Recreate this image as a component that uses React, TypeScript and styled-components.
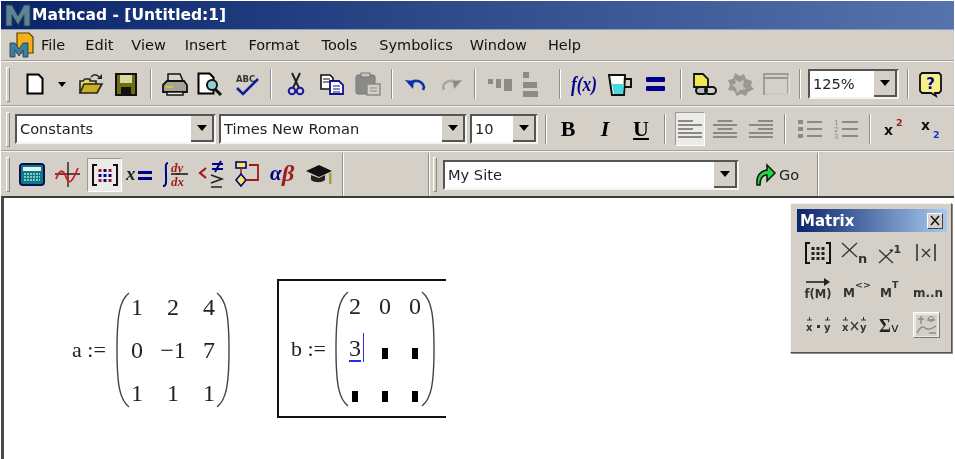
import React from "react";
import styled, { createGlobalStyle } from "styled-components";

const GlobalStyle = createGlobalStyle`
  html, body { margin: 0; padding: 0; background: #fff; }
  body { width: 955px; height: 459px; overflow: hidden; font-family: "DejaVu Sans", sans-serif; }
`;

const UI_FONT = `"DejaVu Sans", "Liberation Sans", sans-serif`;
const MATH_FONT = `"Liberation Serif", serif`;

const Frame = styled.div`
  display: flex;
  flex-direction: column;
  width: 953px;
  height: 458px;
  margin: 1px 0 0 1px;
  background: #d4d0c8;
  filter: blur(0.45px);
`;

const TitleBar = styled.div`
  display: flex;
  align-items: center;
  gap: 1px;
  height: 28px;
  padding-left: 4px;
  background: linear-gradient(90deg, #0a246a 0%, #2c4a8a 45%, #5573ac 100%);
  border-bottom: 1px solid #8a9cc0;
`;

const TitleText = styled.span`
  color: #fff;
  font: bold 15.5px ${UI_FONT};
  white-space: nowrap;
`;

const MenuBar = styled.div`
  display: flex;
  align-items: center;
  height: 30px;
  padding-left: 8px;
`;

const MenuItem = styled.span<{ $ml: number }>`
  margin-left: ${(p) => p.$ml}px;
  font: 14.5px ${UI_FONT};
  color: #111;
  white-space: nowrap;
`;

const Band = styled.div`
  height: 3px;
  background: linear-gradient(#a09e98 0 1px, #f6f5f2 1px 2px, #d4d0c8 2px);
`;

const ToolRow = styled.div<{ $h: number }>`
  display: flex;
  align-items: center;
  height: ${(p) => p.$h}px;
  padding-left: 5px;
`;

const Gripper = styled.div`
  flex: none;
  width: 2px;
  height: 33px;
  border: 1px solid;
  border-color: #fff #8a8a84 #8a8a84 #fff;
`;

const InnerGripper = styled(Gripper)`
  margin-left: 3px;
`;

const Tool = styled.div<{ $w: number; $ml: number }>`
  flex: none;
  display: flex;
  align-items: center;
  justify-content: center;
  width: ${(p) => p.$w}px;
  margin-left: ${(p) => p.$ml}px;
`;

const ActiveTool = styled(Tool)`
  height: 34px;
  background: #ecebe7;
  border: 1px solid;
  border-color: #9a9a94 #fff #fff #9a9a94;
  box-sizing: border-box;
`;

const Sep = styled.div<{ $ml: number }>`
  flex: none;
  width: 1px;
  height: 30px;
  margin-left: ${(p) => p.$ml}px;
  background: #8f8d88;
  border-right: 1px solid #fff;
`;

const EndLine = styled(Sep)`
  height: 43px;
`;

const Combo = styled.div<{ $w: number; $ml: number }>`
  flex: none;
  display: flex;
  box-sizing: border-box;
  width: ${(p) => p.$w}px;
  height: 30px;
  margin-left: ${(p) => p.$ml}px;
  background: #fff;
  border: 2px solid;
  border-color: #555 #f4f4f0 #f4f4f0 #555;
`;

const ComboText = styled.span`
  flex: 1;
  padding-left: 3px;
  font: 14.6px/26px ${UI_FONT};
  color: #222;
  white-space: nowrap;
  overflow: hidden;
`;

const ComboButton = styled.div`
  flex: none;
  display: flex;
  align-items: center;
  justify-content: center;
  width: 23px;
  background: #d4d0c8;
  border-right: 2px solid #555;
  border-bottom: 2px solid #555;
  box-sizing: border-box;
  &::after {
    content: "";
    border: 5px solid transparent;
    border-top: 6px solid #000;
    border-bottom: 0;
  }
`;

const StyleLetter = styled.span<{ $italic?: boolean; $under?: boolean }>`
  font-family: ${MATH_FONT};
  font-weight: bold;
  font-size: 22px;
  color: #000;
  font-style: ${(p) => (p.$italic ? "italic" : "normal")};
  text-decoration: ${(p) => (p.$under ? "underline" : "none")};
`;

const GoText = styled.span`
  margin-left: 3px;
  font: 14.5px ${UI_FONT};
  color: #222;
`;

const Canvas = styled.div`
  position: relative;
  flex: 1;
  background: #fff;
  border-top: 2px solid #3c3c3c;
  border-left: 3px solid #4a4a4a;
`;

const MathRegion = styled.div<{ $left: number; $top: number }>`
  position: absolute;
  left: ${(p) => p.$left}px;
  top: ${(p) => p.$top}px;
  display: flex;
  align-items: center;
  font-family: ${MATH_FONT};
  color: #222;
`;

const SelectedRegion = styled(MathRegion)`
  box-sizing: border-box;
  width: 169px;
  height: 139px;
  padding-left: 12px;
  border: solid #111;
  border-width: 2px 0 2px 2px;
`;

const Assign = styled.span<{ $w: number }>`
  flex: none;
  width: ${(p) => p.$w}px;
  font-size: 22px;
  white-space: pre;
`;

const MatrixGrid = styled.div<{ $col: number; $gap: number }>`
  display: grid;
  grid-template-columns: repeat(3, ${(p) => p.$col}px);
  grid-auto-rows: 43px;
  column-gap: ${(p) => p.$gap}px;
  justify-items: center;
  align-items: center;
  font-size: 24px;
  line-height: 1;
`;

const Cell = styled.span`
  white-space: nowrap;
`;

const Editing = styled.span`
  position: relative;
  display: inline-block;
  border-bottom: 2px solid #2a2ae0;
  line-height: 24px;
  &::after {
    content: "";
    position: absolute;
    right: -3px;
    top: -3px;
    bottom: -2px;
    width: 1px;
    background: #2a2ae0;
  }
`;

const Hole = styled.span`
  display: block;
  width: 6px;
  height: 11px;
  margin-top: 9px;
  background: #000;
`;

const Paren = styled.svg`
  flex: none;
  display: block;
`;

const Palette = styled.div`
  position: absolute;
  left: 786px;
  top: 5px;
  box-sizing: border-box;
  width: 162px;
  height: 150px;
  padding: 5px 4px 0 6px;
  background: #d4d0c8;
  border: 1px solid;
  border-color: #f4f3f0 #555 #555 #f4f3f0;
  box-shadow: 1px 1px 0 #888;
`;

const PaletteTitle = styled.div`
  display: flex;
  align-items: center;
  justify-content: space-between;
  height: 23px;
  padding: 0 4px 0 3px;
  background: linear-gradient(90deg, #0a246a, #a6caf0);
  color: #fff;
  font: bold 15px ${UI_FONT};
`;

const CloseButton = styled.div`
  display: flex;
  align-items: center;
  justify-content: center;
  box-sizing: border-box;
  width: 16px;
  height: 16px;
  background: #d4d0c8;
  border: 1px solid;
  border-color: #fff #444 #444 #fff;
`;

const PaletteGrid = styled.div`
  display: grid;
  grid-template-columns: repeat(4, 36px);
  grid-template-rows: repeat(3, 36px);
  justify-content: center;
  justify-items: center;
  align-items: center;
  margin-top: 3px;
`;

const Pushed = styled.div`
  display: flex;
  align-items: center;
  justify-content: center;
  box-sizing: border-box;
  width: 27px;
  height: 26px;
  background: #e8e7e3;
  border: 1px solid;
  border-color: #fff #777 #777 #fff;
`;

const Ico = ({ w, h, children }: { w: number; h: number; children: React.ReactNode }) => (
  <svg width={w} height={h} viewBox={`0 0 ${w} ${h}`} style={{ display: "block", overflow: "visible" }}>
    {children}
  </svg>
);

const GRAY = "#8d8b86";
const BLUE = "#00008c";
const RED = "#9c1c1c";

const TitleLogo = () => (
  <Ico w={26} h={24}>
    <path d="M1 23V2h6l6 11 6-11h6v21h-6V12l-6 10-6-10v11z" fill="#5d8494" stroke="#26404e" strokeWidth="1" />
  </Ico>
);

const MenuLogo = () => (
  <Ico w={25} h={26}>
    <path d="M8 1h12l4 4v16H8z" fill="#f2b21c" stroke="#5a4000" strokeWidth="1.2" />
    <path d="M1 25V11h5l4 6 4-6h5v14h-5v-7l-4 6-4-6v7z" fill="#3f7f9e" stroke="#16384a" strokeWidth=".8" />
  </Ico>
);

const NewIcon = () => (
  <Ico w={18} h={22}>
    <path d="M1.500 1.500h11l4 4v15h-15z" fill="#fff" stroke="#000" strokeWidth="2" />
  </Ico>
);
const DropIcon = () => (
  <Ico w={8} h={5}>
    <path d="M0 0h8L4 5z" fill="#000" />
  </Ico>
);
const OpenIcon = () => (
  <Ico w={24} h={22}>
    <path d="M1 20V8h3l2-2h5v2h6v3" fill="#e8d86a" stroke="#222" strokeWidth="1.6" />
    <path d="M1 20l4-9h18l-5 9z" fill="#c8b020" stroke="#222" strokeWidth="1.6" />
    <path d="M12 4c2-3 6-3 8 0" fill="none" stroke="#222" strokeWidth="1.5" />
    <path d="M23 1v5h-5z" fill="#222" />
  </Ico>
);
const SaveIcon = () => (
  <Ico w={22} h={23}>
    <rect x="1" y="1" width="20" height="21" fill="#6f6f10" stroke="#111" strokeWidth="2" />
    <rect x="5" y="2" width="12" height="8" fill="#d8d8a0" />
    <rect x="6" y="14" width="10" height="7" fill="#111" />
  </Ico>
);
const PrintIcon = () => (
  <Ico w={26} h={23}>
    <path d="M6 1h12l3 7H6z" fill="#d8d8d0" stroke="#111" strokeWidth="1.5" />
    <path d="M1 12l4-4h17l3 4v7H1z" fill="#a4a49c" stroke="#111" strokeWidth="1.8" />
    <rect x="4" y="13" width="7" height="2" fill="#d8c820" />
    <path d="M5 19h16v3H5z" fill="#eee" stroke="#111" strokeWidth="1.5" />
  </Ico>
);
const PreviewIcon = () => (
  <Ico w={26} h={24}>
    <path d="M1.500 1.500h11l4 4v16h-15z" fill="#fff" stroke="#000" strokeWidth="2" />
    <circle cx="15" cy="13" r="5" fill="#8fd0d8" stroke="#111" strokeWidth="2" />
    <path d="M18 17l6 6" stroke="#111" strokeWidth="3" />
  </Ico>
);
const SpellIcon = () => (
  <Ico w={24} h={23}>
    <text x="1" y="9" fontFamily={UI_FONT} fontWeight="bold" fontSize="8.5" fill="#333">ABC</text>
    <path d="M2 15l6 6L23 6" fill="none" stroke="#0c1f9a" strokeWidth="2.6" />
  </Ico>
);
const CutIcon = () => (
  <Ico w={16} h={24}>
    <path d="M4 1l7 15M12 1L5 16" stroke="#222" strokeWidth="2" />
    <circle cx="4" cy="19" r="3.3" fill="none" stroke="#1a1a9c" strokeWidth="2" />
    <circle cx="12" cy="19" r="3.3" fill="none" stroke="#1a1a9c" strokeWidth="2" />
  </Ico>
);
const CopyIcon = () => (
  <Ico w={24} h={21}>
    <path d="M1 1h9l3 3v11H1z" fill="#fff" stroke="#111" strokeWidth="1.6" />
    <path d="M3 5h7M3 8h7" stroke="#111" />
    <path d="M10 7h9l4 4v9H10z" fill="#fff" stroke="#101090" strokeWidth="1.8" />
    <path d="M13 12h7M13 15h7M13 18h7" stroke="#101090" />
  </Ico>
);
const PasteIcon = () => (
  <Ico w={26} h={24}>
    <rect x="1" y="3" width="19" height="19" rx="2" fill="#8a8a86" stroke="#777" />
    <rect x="6" y="1" width="9" height="4" fill="#c8c8c4" stroke="#777" />
    <rect x="12" y="12" width="13" height="11" fill="#d4d0c8" stroke="#8a8a86" strokeWidth="1.5" />
    <path d="M15 16h7M15 19h7" stroke="#8a8a86" />
  </Ico>
);
const UndoIcon = () => (
  <Ico w={21} h={15}>
    <path d="M4 7c5-5 13-4 15 3l-1 3" fill="none" stroke="#1030a8" strokeWidth="2.6" />
    <path d="M0 3l9 1-1 8z" fill="#1030a8" />
  </Ico>
);
const RedoIcon = () => (
  <Ico w={21} h={15}>
    <path d="M17 7c-5-5-13-4-15 3l1 3" fill="none" stroke="#a8a8a2" strokeWidth="2.6" />
    <path d="M21 3l-9 1 1 8z" fill="#8a8a86" />
  </Ico>
);
const AlignHIcon = () => (
  <Ico w={24} h={13}>
    <rect x="0" y="1" width="5" height="5" fill={GRAY} />
    <rect x="8" y="1" width="5" height="9" fill={GRAY} />
    <rect x="16" y="1" width="8" height="12" fill={GRAY} />
  </Ico>
);
const AlignVIcon = () => (
  <Ico w={15} h={25}>
    <rect x="0" y="0" width="6" height="6" fill={GRAY} />
    <rect x="0" y="10" width="14" height="6" fill={GRAY} />
    <rect x="0" y="19" width="15" height="6" fill={GRAY} />
  </Ico>
);
const FxIcon = () => (
  <Ico w={26} h={24}>
    <text x="0" y="19" fontFamily={MATH_FONT} fontStyle="italic" fontWeight="bold" fontSize="22" fill={BLUE} textLength="26" lengthAdjust="spacingAndGlyphs">f(x)</text>
  </Ico>
);
const BeakerIcon = () => (
  <Ico w={24} h={23}>
    <path d="M1 2h16l-1 20H4z" fill="#fff" stroke="#111" strokeWidth="2" />
    <path d="M4 11h12l-1 10H6z" fill="#49d8e0" />
    <path d="M17 6h6v8h-6" fill="none" stroke="#111" strokeWidth="2" />
  </Ico>
);
const EqualIcon = () => (
  <Ico w={19} h={14}>
    <rect x="0" y="0" width="19" height="5" rx="1" fill={BLUE} />
    <rect x="0" y="9" width="19" height="5" rx="1" fill={BLUE} />
  </Ico>
);
const LinkIcon = () => (
  <Ico w={24} h={22}>
    <path d="M1 1h9l5 5v8H1z" fill="#f0e850" stroke="#111" strokeWidth="1.8" />
    <rect x="3" y="14" width="11" height="7" rx="3.5" fill="#bbb" stroke="#111" strokeWidth="2" />
    <rect x="12" y="14" width="11" height="7" rx="3.5" fill="none" stroke="#111" strokeWidth="2" />
  </Ico>
);
const GearIcon = () => (
  <Ico w={27} h={24}>
    <path d="M8 1l5 3 4-2 2 5 6 2-1 5 3 3-6 3-2 4-5-2-4 2-3-5-6-1 2-5-2-5 5-1z" fill="#9a9892" />
    <path d="M8 7l4 3 5-2-1 6 3 3-6 1-3 3-1-5-4-3 4-2z" fill="#c4c2bc" />
  </Ico>
);
const WindowIcon = () => (
  <Ico w={26} h={22}>
    <rect x="1" y="1" width="24" height="20" fill="#d4d0c8" stroke="#9a9892" strokeWidth="1.8" />
    <path d="M1 5h24" stroke="#9a9892" strokeWidth="2" />
    <path d="M2 21h24V2" fill="none" stroke="#f4f4f0" />
  </Ico>
);
const HelpIcon = () => (
  <Ico w={23} h={25}>
    <path d="M3 1h17l2 2v16l-2 2h-4l1 3-5-3H3l-2-2V3z" fill="#f6f08a" stroke="#111" strokeWidth="1.8" />
    <text x="11.5" y="17" textAnchor="middle" fontFamily={UI_FONT} fontWeight="bold" fontSize="15" fill={BLUE}>?</text>
  </Ico>
);
const LinesIcon = ({ kind }: { kind: "left" | "center" | "right" }) => {
  const rows = [0, 1, 2, 3, 4];
  const widths = [15, 24, 15, 24, 24];
  return (
    <Ico w={24} h={20}>
      {rows.map((r) => {
        const w = widths[r];
        const x = kind === "left" ? 0 : kind === "center" ? (24 - w) / 2 : 24 - w;
        return <rect key={r} x={x} y={r * 4 + 1} width={w} height="2" fill="#8a8a84" />;
      })}
    </Ico>
  );
};
const BulletIcon = () => (
  <Ico w={24} h={20}>
    {[1, 8, 15].map((y) => (
      <g key={y}>
        <rect x="0" y={y} width="5" height="4" fill="#8a8a84" />
        <rect x="9" y={y + 1} width="15" height="2" fill="#8a8a84" />
      </g>
    ))}
  </Ico>
);
const NumberIcon = () => (
  <Ico w={24} h={20}>
    {[1, 8, 15].map((y, i) => (
      <g key={y}>
        <text x="0" y={y + 5} fontFamily={UI_FONT} fontSize="7" fill="#8a8a84">{i + 1}</text>
        <rect x="8" y={y + 1} width="16" height="2" fill="#8a8a84" />
      </g>
    ))}
  </Ico>
);
const ScriptIcon = ({ sup }: { sup: boolean }) => (
  <Ico w={20} h={20}>
    <text x="0" y={sup ? 16 : 11} fontFamily={UI_FONT} fontWeight="bold" fontSize="14" fill="#111">x</text>
    <text x="12" y={sup ? 7 : 19} fontFamily={UI_FONT} fontWeight="bold" fontSize="9.5" fill={sup ? RED : "#1a2ee0"}>2</text>
  </Ico>
);
const CalcIcon = () => (
  <Ico w={26} h={23}>
    <rect x="1" y="1" width="24" height="21" rx="3" fill="#0a7a88" stroke="#06104a" strokeWidth="2" />
    <rect x="4" y="4" width="18" height="4" fill="#e8eee8" />
    <path d="M5 11h16M5 14h16M5 17h16" stroke="#b8e0d8" strokeWidth="1.5" strokeDasharray="2 1" />
  </Ico>
);
const GraphIcon = () => (
  <Ico w={25} h={25}>
    <path d="M13 0v25M0 12h25" stroke="#222" strokeWidth="1.4" />
    <path d="M1 17c4-10 7-10 10-2s6 6 12-9" fill="none" stroke="#e8141c" strokeWidth="1.8" />
  </Ico>
);
const DotsMatrixIcon = ({ dark }: { dark?: boolean }) => {
  const xs = [8, 13, 18];
  const ys = [5, 10, 15];
  return (
    <Ico w={26} h={22}>
      <path d="M5 1H1v20h4M21 1h4v20h-4" fill="none" stroke="#111" strokeWidth="2" />
      {ys.map((y, r) =>
        xs.map((x, c) => (
          <rect
            key={`${r}${c}`}
            x={x - 1.5}
            y={y}
            width="3"
            height="3"
            fill={dark ? "#222" : c === 1 || r === 1 ? BLUE : RED}
          />
        )),
      )}
    </Ico>
  );
};
const XEqualIcon = () => (
  <Ico w={26} h={16}>
    <text x="0" y="13" fontFamily={MATH_FONT} fontStyle="italic" fontWeight="bold" fontSize="19" fill="#222">x</text>
    <rect x="12" y="4" width="14" height="3" fill={BLUE} />
    <rect x="12" y="10" width="14" height="3" fill={BLUE} />
  </Ico>
);
const CalculusIcon = () => (
  <Ico w={27} h={27}>
    <path d="M6 2C3 2 4 6 4 13s1 12-3 12" fill="none" stroke={BLUE} strokeWidth="2" />
    <text x="9" y="11" fontFamily={MATH_FONT} fontStyle="italic" fontWeight="bold" fontSize="13" fill={RED}>dy</text>
    <path d="M9 13h17" stroke="#111" strokeWidth="1.5" />
    <text x="9" y="25" fontFamily={MATH_FONT} fontStyle="italic" fontWeight="bold" fontSize="13" fill={RED}>dx</text>
  </Ico>
);
const BooleanIcon = () => (
  <Ico w={26} h={27}>
    <path d="M8 7L2 12l6 5" fill="none" stroke={RED} strokeWidth="2.2" />
    <path d="M14 3h11M14 8h11M23 0l-6 11" stroke={BLUE} strokeWidth="2" />
    <path d="M13 14l11 4-11 4M13 26h11" fill="none" stroke="#222" strokeWidth="1.6" />
  </Ico>
);
const FlowIcon = () => (
  <Ico w={24} h={27}>
    <rect x="1" y="1" width="10" height="6" fill="#f4ec50" stroke={BLUE} strokeWidth="1.6" />
    <path d="M6 7v6" stroke={RED} strokeWidth="1.5" />
    <path d="M6 13l5 6-5 6-5-6z" fill="#f4ec50" stroke={BLUE} strokeWidth="1.6" />
    <path d="M14 4h9v15H11" fill="none" stroke={RED} strokeWidth="1.8" />
  </Ico>
);
const GreekIcon = () => (
  <Ico w={26} h={24}>
    <text x="0" y="17" fontFamily={MATH_FONT} fontStyle="italic" fontWeight="bold" fontSize="21" fill={BLUE}>α</text>
    <text x="12" y="18" fontFamily={MATH_FONT} fontStyle="italic" fontWeight="bold" fontSize="24" fill={RED}>β</text>
  </Ico>
);
const HatIcon = () => (
  <Ico w={26} h={22}>
    <path d="M0 7l13-6 13 6-13 6z" fill="#111" />
    <path d="M5 11v5c4 3 10 3 14 0v-5l-6 3z" fill="#222" />
    <rect x="23" y="9" width="2.5" height="11" fill="#a8a030" />
  </Ico>
);
const GoIcon = () => (
  <Ico w={21} h={26}>
    <path d="M2 23C1 13 6 9 12 8V3l8 8-8 8v-6c-4 0-7 3-7 10z" fill="#18e040" stroke="#111" strokeWidth="1.5" />
  </Ico>
);

const CloseGlyph = () => (
  <Ico w={10} h={9}>
    <path d="M1 0l8 9M9 0L1 9" stroke="#111" strokeWidth="1.5" />
  </Ico>
);
const XnIcon = () => (
  <Ico w={26} h={22}>
    <path d="M1 1l15 14M16 1L1 15" stroke="#333" strokeWidth="1.3" />
    <text x="17" y="21" fontFamily={UI_FONT} fontWeight="bold" fontSize="13" fill="#333">n</text>
  </Ico>
);
const XInvIcon = () => (
  <Ico w={24} h={22}>
    <path d="M1 8l14 13M15 8L1 21" stroke="#333" strokeWidth="1.3" />
    <text x="11" y="11" fontFamily={UI_FONT} fontWeight="bold" fontSize="11" fill="#333">-1</text>
  </Ico>
);
const DetIcon = () => (
  <Ico w={20} h={18}>
    <path d="M1 0v17M19 0v17" stroke="#333" strokeWidth="1.6" />
    <path d="M6 5l8 8M14 5l-8 8" stroke="#333" strokeWidth="1.3" />
  </Ico>
);
const VectorizeIcon = () => (
  <Ico w={26} h={24}>
    <path d="M1 5h22" stroke="#222" strokeWidth="1.6" />
    <path d="M25 5l-6-4v8z" fill="#222" />
    <text x="13" y="21" textAnchor="middle" fontFamily={UI_FONT} fontWeight="bold" fontSize="11.5" fill="#333">f(M)</text>
  </Ico>
);
const SmallLabel = ({ w, main, sup }: { w: number; main: string; sup?: string }) => (
  <Ico w={w} h={20}>
    <text x="0" y="18" fontFamily={UI_FONT} fontWeight="bold" fontSize="12" fill="#333">{main}</text>
    {sup && (
      <text x="12" y="9" fontFamily={UI_FONT} fontWeight="bold" fontSize="9.5" fill="#333">{sup}</text>
    )}
  </Ico>
);
const VecOpIcon = ({ cross }: { cross?: boolean }) => (
  <Ico w={24} h={16}>
    <text x="0" y="14" fontFamily={UI_FONT} fontWeight="bold" fontSize="10" fill="#333">x</text>
    <path d="M1 3h5M3.5 0v3" stroke="#333" />
    {cross ? (
      <path d="M9 5l7 8M16 5l-7 8" stroke="#333" strokeWidth="1.2" />
    ) : (
      <rect x="11" y="8" width="3" height="3" fill="#333" />
    )}
    <text x="18" y="14" fontFamily={UI_FONT} fontWeight="bold" fontSize="10" fill="#333">y</text>
    <path d="M19 3h5M21.5 0v3" stroke="#333" />
  </Ico>
);
const SumIcon = () => (
  <Ico w={23} h={15}>
    <text x="0" y="14" fontFamily={MATH_FONT} fontWeight="bold" fontSize="18" fill="#222">Σ</text>
    <text x="12" y="14" fontFamily={UI_FONT} fontSize="13" fill="#222">v</text>
  </Ico>
);
const PictureIcon = () => (
  <Ico w={21} h={21}>
    <rect x="0" y="0" width="21" height="21" fill="#d4d0c8" />
    <path d="M5 1v8M2 4h6M1 18c4-7 6-7 8-5s5 2 11-2M11 5h8M13 18h7" fill="none" stroke="#8a8a84" strokeWidth="1.4" />
    <circle cx="15" cy="4" r="2.5" fill="none" stroke="#8a8a84" />
  </Ico>
);

const ParenShape = ({ right }: { right?: boolean }) => (
  <Paren width="14" height="116" viewBox="0 0 14 116">
    <path
      d={right ? "M1 1C10 8 13 22 13 58S10 108 1 115" : "M13 1C4 8 1 22 1 58S4 108 13 115"}
      fill="none"
      stroke="#444"
      strokeWidth="1.4"
    />
  </Paren>
);

const MENUS: [string, number][] = [
  ["File", 7],
  ["Edit", 20],
  ["View", 18],
  ["Insert", 19],
  ["Format", 22],
  ["Tools", 22],
  ["Symbolics", 22],
  ["Window", 17],
  ["Help", 21],
];

const A_CELLS = ["1", "2", "4", "0", "−1", "7", "1", "1", "1"];

export default function App() {
  return (
    <>
      <GlobalStyle />
      <Frame>
        <TitleBar>
          <TitleLogo />
          <TitleText>Mathcad - [Untitled:1]</TitleText>
        </TitleBar>
        <MenuBar>
          <MenuLogo />
          {MENUS.map(([name, ml]) => (
            <MenuItem key={name} $ml={ml}>{name}</MenuItem>
          ))}
        </MenuBar>
        <Band />
        <ToolRow $h={42}>
          <Gripper />
          <Tool $w={18} $ml={16}><NewIcon /></Tool>
          <Tool $w={8} $ml={14}><DropIcon /></Tool>
          <Tool $w={24} $ml={13}><OpenIcon /></Tool>
          <Tool $w={22} $ml={12}><SaveIcon /></Tool>
          <Sep $ml={13} />
          <Tool $w={25} $ml={10}><PrintIcon /></Tool>
          <Tool $w={25} $ml={10}><PreviewIcon /></Tool>
          <Tool $w={24} $ml={13}><SpellIcon /></Tool>
          <Sep $ml={11} />
          <Tool $w={16} $ml={16}><CutIcon /></Tool>
          <Tool $w={24} $ml={16}><CopyIcon /></Tool>
          <Tool $w={26} $ml={11}><PasteIcon /></Tool>
          <Sep $ml={10} />
          <Tool $w={20} $ml={12}><UndoIcon /></Tool>
          <Tool $w={21} $ml={16}><RedoIcon /></Tool>
          <Sep $ml={12} />
          <Tool $w={24} $ml={12}><AlignHIcon /></Tool>
          <Tool $w={15} $ml={11}><AlignVIcon /></Tool>
          <Sep $ml={21} />
          <Tool $w={25} $ml={10}><FxIcon /></Tool>
          <Tool $w={24} $ml={12}><BeakerIcon /></Tool>
          <Tool $w={19} $ml={14}><EqualIcon /></Tool>
          <Sep $ml={15} />
          <Tool $w={24} $ml={11}><LinkIcon /></Tool>
          <Tool $w={27} $ml={10}><GearIcon /></Tool>
          <Tool $w={26} $ml={9}><WindowIcon /></Tool>
          <Sep $ml={10} />
          <Combo $w={91} $ml={7}>
            <ComboText>125%</ComboText>
            <ComboButton />
          </Combo>
          <Sep $ml={8} />
          <Tool $w={23} $ml={10}><HelpIcon /></Tool>
        </ToolRow>
        <Band />
        <ToolRow $h={42}>
          <Gripper />
          <Combo $w={201} $ml={5}>
            <ComboText>Constants</ComboText>
            <ComboButton />
          </Combo>
          <Combo $w={248} $ml={3}>
            <ComboText>Times New Roman</ComboText>
            <ComboButton />
          </Combo>
          <Combo $w={68} $ml={3}>
            <ComboText>10</ComboText>
            <ComboButton />
          </Combo>
          <Sep $ml={7} />
          <Tool $w={16} $ml={13}><StyleLetter>B</StyleLetter></Tool>
          <Tool $w={16} $ml={21}><StyleLetter $italic>I</StyleLetter></Tool>
          <Tool $w={16} $ml={20}><StyleLetter $under>U</StyleLetter></Tool>
          <Sep $ml={15} />
          <ActiveTool $w={30} $ml={9}><LinesIcon kind="left" /></ActiveTool>
          <Tool $w={24} $ml={8}><LinesIcon kind="center" /></Tool>
          <Tool $w={24} $ml={12}><LinesIcon kind="right" /></Tool>
          <Sep $ml={11} />
          <Tool $w={24} $ml={12}><BulletIcon /></Tool>
          <Tool $w={24} $ml={12}><NumberIcon /></Tool>
          <Sep $ml={11} />
          <Tool $w={20} $ml={13}><ScriptIcon sup /></Tool>
          <Tool $w={20} $ml={17}><ScriptIcon sup={false} /></Tool>
        </ToolRow>
        <Band />
        <ToolRow $h={43}>
          <Gripper />
          <Tool $w={26} $ml={9}><CalcIcon /></Tool>
          <Tool $w={25} $ml={10}><GraphIcon /></Tool>
          <ActiveTool $w={35} $ml={7}><DotsMatrixIcon /></ActiveTool>
          <Tool $w={26} $ml={4}><XEqualIcon /></Tool>
          <Tool $w={27} $ml={10}><CalculusIcon /></Tool>
          <Tool $w={26} $ml={9}><BooleanIcon /></Tool>
          <Tool $w={24} $ml={11}><FlowIcon /></Tool>
          <Tool $w={26} $ml={11}><GreekIcon /></Tool>
          <Tool $w={26} $ml={10}><HatIcon /></Tool>
          <EndLine $ml={10} />
          <EndLine $ml={84} />
          <InnerGripper />
          <Combo $w={296} $ml={6}>
            <ComboText>My Site</ComboText>
            <ComboButton />
          </Combo>
          <Tool $w={44} $ml={16}>
            <GoIcon />
            <GoText>Go</GoText>
          </Tool>
          <EndLine $ml={18} />
        </ToolRow>
        <Canvas>
          <MathRegion $left={68} $top={87}>
            <Assign $w={44}>a :=</Assign>
            <ParenShape />
            <MatrixGrid $col={14} $gap={22}>
              {A_CELLS.map((v, i) => (
                <Cell key={i}>{v}</Cell>
              ))}
            </MatrixGrid>
            <ParenShape right />
          </MathRegion>
          <SelectedRegion $left={273} $top={81}>
            <Assign $w={44}>b :=</Assign>
            <ParenShape />
            <MatrixGrid $col={12} $gap={18}>
              <Cell>2</Cell>
              <Cell>0</Cell>
              <Cell>0</Cell>
              <Cell><Editing>3</Editing></Cell>
              <Hole />
              <Hole />
              <Hole />
              <Hole />
              <Hole />
            </MatrixGrid>
            <ParenShape right />
          </SelectedRegion>
          <Palette>
            <PaletteTitle>
              Matrix
              <CloseButton><CloseGlyph /></CloseButton>
            </PaletteTitle>
            <PaletteGrid>
              <DotsMatrixIcon dark />
              <XnIcon />
              <XInvIcon />
              <DetIcon />
              <VectorizeIcon />
              <SmallLabel w={22} main="M" sup="<>" />
              <SmallLabel w={20} main="M" sup="T" />
              <SmallLabel w={26} main="m..n" />
              <VecOpIcon />
              <VecOpIcon cross />
              <SumIcon />
              <Pushed><PictureIcon /></Pushed>
            </PaletteGrid>
          </Palette>
        </Canvas>
      </Frame>
    </>
  );
}
